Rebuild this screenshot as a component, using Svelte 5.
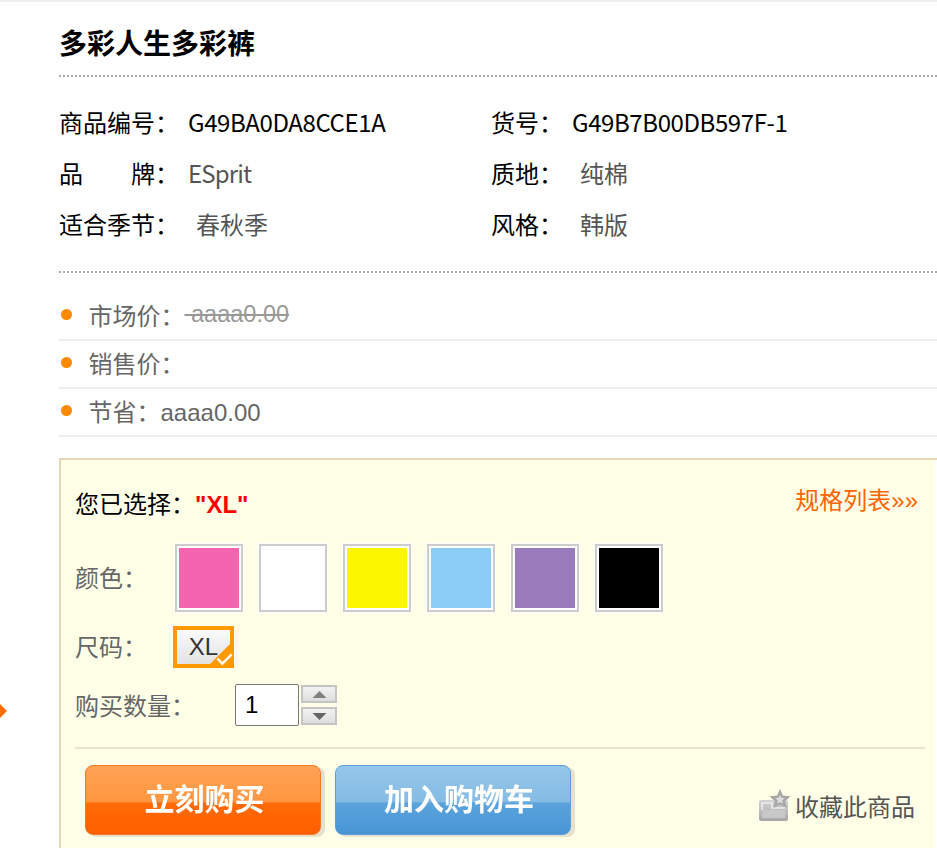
<script>
  const colon = '\uFF1A';
  const specs = [
    [{ label: '商品编号', value: 'G49BA0DA8CCE1A', cls: 'dark' }, { label: '货号', value: 'G49B7B00DB597F-1', cls: 'dark' }],
    [{ label: '品\u3000\u3000牌', value: 'ESprit', cls: 'brand' }, { label: '质地', value: '纯棉', cls: 'wide' }],
    [{ label: '适合季节', value: '春秋季', cls: 'wide' }, { label: '风格', value: '韩版', cls: 'wide' }]
  ];
  const colors = ['#f564ae', '#ffffff', '#fcf600', '#8ccdf5', '#9a7cbc', '#000000'];
</script>

<div class="page">
  <div class="arrow"></div>
  <h1>多彩人生多彩裤</h1>

  <div class="specs">
    {#each specs as row}
      <div class="spec-row">
        {#each row as s}
          <div class="spec">
            <span class="lab">{s.label}{colon}</span><span class="val {s.cls}">{s.value}</span>
          </div>
        {/each}
      </div>
    {/each}
  </div>

  <ul class="prices">
    <li><span class="dot"></span>市场价{colon}<s>&nbsp;aaaa0.00</s></li>
    <li><span class="dot"></span>销售价{colon}</li>
    <li><span class="dot"></span>节省{colon}aaaa0.00</li>
  </ul>

  <div class="panel">
    <div class="sel">
      <span>您已选择{colon}<b>"XL"</b></span>
      <span class="list">规格列表»»</span>
    </div>

    <div class="color-row">
      <span class="name">颜色{colon}</span>
      <div class="swatches">
        {#each colors as c}
          <span class="swatch"><span class="fill" style="background:{c}"></span></span>
        {/each}
      </div>
    </div>

    <div class="size-row">
      <span class="name">尺码{colon}</span>
      <span class="size">XL
        <svg class="tick" width="20" height="20" viewBox="0 0 20 20">
          <path d="M20 0V20H0Z" fill="#f90"/>
          <path d="M7.300 14.500l5 5.200 9.400-9.300" fill="none" stroke="#fff" stroke-width="2.400"/>
        </svg>
      </span>
    </div>

    <div class="qty-row">
      <span class="name">购买数量{colon}</span>
      <span class="qty">1</span>
      <div class="steppers">
        <span class="step"><svg viewBox="0 0 16 8"><path d="M8 0l8 8H0Z" fill="#808080"/></svg></span>
        <span class="step"><svg viewBox="0 0 16 8"><path d="M0 0h16L8 8Z" fill="#666"/></svg></span>
      </div>
    </div>

    <div class="actions">
      <span class="btn orange"><span class="cap">立刻购买</span></span>
      <span class="btn blue"><span class="cap">加入购物车</span></span>
      <span class="fav">
        <svg width="33" height="33" viewBox="0 0 33 33">
          <defs><linearGradient id="g" x1="0" y1="0" x2="0" y2="1"><stop offset="0" stop-color="#d4d4d4"/><stop offset="1" stop-color="#a6a6a6"/></linearGradient></defs>
          <rect x="1" y="11" width="29" height="21" rx="2" fill="url(#g)"/>
          <path d="M4 21v-7h10v5h13" fill="none" stroke="#eee" stroke-width="1.500"/>
          <rect x="4" y="21" width="23" height="8" fill="#c8c8c8"/>
          <path d="M22 0l3 6.500 7.500.8-5.500 5 1.500 6.500L22 15.500 15.500 19 17 12.300l-5.500-5 7.500-.8Z" fill="#a8a8a8"/>
          <path d="M22 6l1.300 2.800 3.200.4-2.300 2.200.6 3L22 13l-2.800 1.400.6-3-2.300-2.200 3.200-.4Z" fill="#dedede"/>
        </svg>
        收藏此商品
      </span>
    </div>
  </div>
</div>

<style>
  :global(html), :global(body) { margin: 0; overflow: hidden; height: 848px; background: #fff; }
  .page {
    position: relative;
    box-sizing: border-box;
    width: 937px;
    height: 848px;
    overflow: hidden;
    padding: 2px 0 0 59px;
    background: linear-gradient(#eee 2px, #fff 2px);
    font-family: Arial, "Liberation Sans", "Noto Sans CJK SC", sans-serif;
    font-size: 24px;
    color: #666;
  }
  .arrow {
    position: absolute;
    left: -10px;
    top: 704px;
    width: 14px;
    height: 14px;
    background: #ff6a00;
    transform: rotate(45deg);
  }
  h1 {
    margin: 0;
    height: 73px;
    line-height: 80px;
    font-size: 28px;
    font-weight: 700;
    color: #000;
    font-family: "Noto Sans CJK SC", sans-serif;
    border-bottom: 2px dotted #aaa;
  }
  .specs {
    padding: 19px 0 22px;
    border-bottom: 2px dotted #aaa;
    font-family: "Noto Sans CJK SC", sans-serif;
  }
  .spec-row { display: flex; height: 51px; line-height: 51px; }
  .spec { width: 432px; white-space: nowrap; }
  .lab { color: #000; }
  .val { margin-left: 9px; color: #555; }
  .val.dark { color: #000; letter-spacing: -0.4px; }
  .val.brand { letter-spacing: -0.85px; }
  .val.wide { margin-left: 17px; }
  .prices { list-style: none; margin: 0; padding: 20px 0 0; }
  .prices li {
    box-sizing: border-box;
    display: flex;
    align-items: center;
    height: 48px;
    padding-bottom: 3px;
    border-bottom: 2px solid #eee;
    white-space: pre;
  }
  .dot {
    width: 11px;
    height: 11px;
    border-radius: 50%;
    background: #ff8a00;
    margin: 0 16.500px 0 2px;
  }
  s { color: #999; font-size: 23.500px; }
  .panel {
    box-sizing: border-box;
    margin-top: 21px;
    height: 420px;
    border: 2px solid #e3d8b3;
    border-width: 2px 0 2px 2px;
    background: linear-gradient(#ffffe8, #ffffe8) 0 0 / 874px 100% no-repeat;
    padding: 0 12px 0 14px;
  }
  .sel {
    display: flex;
    justify-content: space-between;
    height: 84px;
    align-items: center;
    color: #000;
  }
  .sel b { color: #f00; font-family: Arial, "Liberation Sans", sans-serif; }
  .list { color: #ff6400; margin-right: 7px; transform: translateY(-4px); }
  .name { color: #666; }
  .color-row { display: flex; align-items: center; height: 68px; }
  .color-row .name { width: 100px; padding-bottom: 4px; }
  .swatches { display: flex; gap: 16px; }
  .swatch {
    box-sizing: border-box;
    width: 68px;
    height: 68px;
    padding: 2px;
    border: 2px solid #ccc;
    background: #fff;
    box-shadow: 0 0 0 1px #fff;
  }
  .fill { display: block; width: 100%; height: 100%; }
  .size-row { display: flex; align-items: center; height: 42px; margin-top: 14px; }
  .size-row .name { width: 98px; padding-bottom: 4px; }
  .size {
    position: relative;
    box-sizing: border-box;
    width: 61px;
    height: 42px;
    border: 4px solid #f90;
    background: linear-gradient(#fafafa, #e2e2e2);
    color: #333;
    text-align: center;
    line-height: 33px;
  }
  .tick { position: absolute; right: 0; bottom: 0; overflow: visible; }
  .qty-row { display: flex; align-items: center; height: 44px; margin-top: 15px; }
  .qty-row .name { width: 160px; padding-bottom: 2px; }
  .qty {
    box-sizing: border-box;
    width: 64px;
    height: 42px;
    border: 1px solid #777;
    border-radius: 2px;
    background: #fff;
    color: #000;
    padding-left: 9px;
    line-height: 40px;
  }
  .steppers { display: flex; flex-direction: column; gap: 4px; margin-left: 2px; }
  .step {
    box-sizing: border-box;
    display: flex;
    align-items: center;
    justify-content: center;
    width: 36px;
    height: 18px;
    border: 2px solid #c4c4c4;
    background: linear-gradient(#f2f2f2, #dedede);
  }
  .step svg { width: 15px; height: 7px; }
  .actions {
    display: flex;
    align-items: flex-start;
    margin-top: 20px;
    padding-top: 16px;
    border-top: 2px solid #e8e4d0;
  }
  .btn {
    box-sizing: border-box;
    width: 236px;
    height: 70px;
    border-radius: 8px;
    color: #fff;
    font-family: "Noto Sans CJK SC", sans-serif;
    font-weight: 700;
    font-size: 30px;
    text-align: center;
    line-height: 62px;
    box-shadow: 4px 2px 0 #e6e0cc;
    border: 1px solid;
  }
  .cap { filter: blur(0.4px); display: inline-block; }
  .orange {
    border-color: #f07820;
    background: linear-gradient(#ffa455 0, #ff9640 52%, #ff6a05 55%, #ff5f00 100%);
    margin-left: 10px;
    padding-left: 3px;
  }
  .blue {
    border-color: #5c9ed8;
    background: linear-gradient(#94c6ea 0, #86bce4 52%, #5aa3dc 55%, #4795d5 100%);
    margin-left: 14px;
    padding-left: 12px;
  }
  .fav {
    display: flex;
    align-items: center;
    gap: 4px;
    margin: 22px 10px 0 auto;
    height: 36px;
    color: #555;
    white-space: nowrap;
  }
</style>
